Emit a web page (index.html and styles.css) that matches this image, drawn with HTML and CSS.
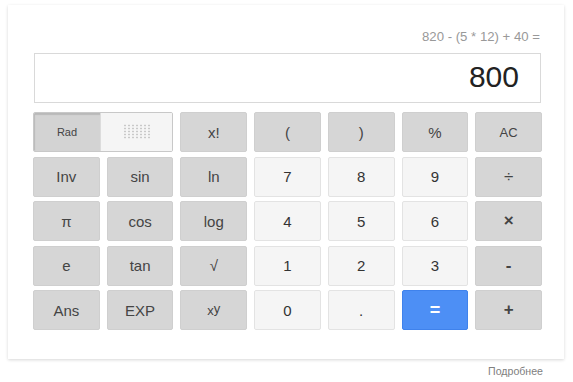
FILE: index.html
```html
<!DOCTYPE html>
<html lang="ru">
<head>
<meta charset="utf-8">
<link rel="stylesheet" href="styles.css">
</head>
<body>
<div class="card">
  <div class="expr">820 - (5 * 12) + 40 =</div>
  <div class="display">800</div>
  <div class="keys">
    <div class="mode">
      <div class="mode-rad">Rad</div>
      <div class="mode-deg"><span class="dots"></span></div>
    </div>
    <div class="key fn">x!</div>
    <div class="key fn">(</div>
    <div class="key fn">)</div>
    <div class="key fn">%</div>
    <div class="key fn small">AC</div>

    <div class="key fn">Inv</div>
    <div class="key fn">sin</div>
    <div class="key fn">ln</div>
    <div class="key num">7</div>
    <div class="key num">8</div>
    <div class="key num">9</div>
    <div class="key fn op">÷</div>

    <div class="key fn">π</div>
    <div class="key fn">cos</div>
    <div class="key fn">log</div>
    <div class="key num">4</div>
    <div class="key num">5</div>
    <div class="key num">6</div>
    <div class="key fn op bold">×</div>

    <div class="key fn">e</div>
    <div class="key fn">tan</div>
    <div class="key fn">√</div>
    <div class="key num">1</div>
    <div class="key num">2</div>
    <div class="key num">3</div>
    <div class="key fn op bold">-</div>

    <div class="key fn">Ans</div>
    <div class="key fn">EXP</div>
    <div class="key fn small">x<span class="sup">y</span></div>
    <div class="key num">0</div>
    <div class="key num">.</div>
    <div class="key eq">=</div>
    <div class="key fn op bold">+</div>
  </div>
</div>
<div class="more">Подробнее</div>
</body>
</html>
```
FILE: styles.css
```css
html, body {
  margin: 0;
  padding: 0;
  background: #fff;
  font-family: "Liberation Sans", Arial, sans-serif;
}

.card {
  box-sizing: border-box;
  margin: 5px 0 0 8px;
  width: 556px;
  height: 354px;
  padding: 24px 22px 0 25px;
  background: #fff;
  box-shadow: 0 1px 3px rgba(0, 0, 0, 0.16);
}

.expr {
  font-size: 13.2px;
  line-height: 16px;
  color: #999;
  text-align: right;
  padding-right: 2px;
}

.display {
  box-sizing: border-box;
  margin: 8px 1px 0 1px;
  height: 50px;
  border: 1px solid #d9d9d9;
  font-size: 30px;
  line-height: 46px;
  color: #222;
  text-align: right;
  padding-right: 21px;
}

.keys {
  margin-top: 9px;
  display: grid;
  grid-template-columns: repeat(7, 1fr);
  grid-template-rows: repeat(5, 40px);
  column-gap: 7px;
  row-gap: 4.5px;
}

.key {
  box-sizing: border-box;
  display: flex;
  align-items: center;
  justify-content: center;
  border-radius: 2px;
  font-size: 15px;
  color: #444;
}

.fn {
  background: #d6d6d6;
  border: 1px solid #cfcfcf;
}

.num {
  background: #f5f5f5;
  border: 1px solid #e3e3e3;
  color: #333;
}

.eq {
  background: #4d8ff5;
  border: 1px solid #3f82ec;
  color: #fff;
  font-weight: bold;
  font-size: 18px;
}

.small {
  font-size: 13px;
}

.op {
  font-size: 17px;
  color: #444;
}

.bold {
  font-weight: bold;
}

.sup {
  position: relative;
  top: -2px;
}

.mode {
  grid-column: span 2;
  display: flex;
  box-sizing: border-box;
  border: 1px solid #c8c8c8;
  border-radius: 2px;
  overflow: hidden;
}

.mode-rad {
  width: 66px;
  display: flex;
  align-items: center;
  justify-content: center;
  background: #d3d3d3;
  box-shadow: inset 1px 2px 1px rgba(0, 0, 0, 0.12);
  font-size: 11px;
  color: #444;
}

.mode-deg {
  flex: 1;
  display: flex;
  align-items: center;
  justify-content: center;
  background: #f5f5f5;
  border-left: 1px solid #dcdcdc;
}

.dots {
  width: 28px;
  height: 15px;
  margin-top: -2px;
  background-image: radial-gradient(circle, #c9c9c9 0.8px, transparent 1.2px);
  background-size: 4px 3px;
}

.more {
  width: 543px;
  margin-top: 6px;
  font-size: 10.6px;
  line-height: 13px;
  color: #808080;
  text-align: right;
}
```
